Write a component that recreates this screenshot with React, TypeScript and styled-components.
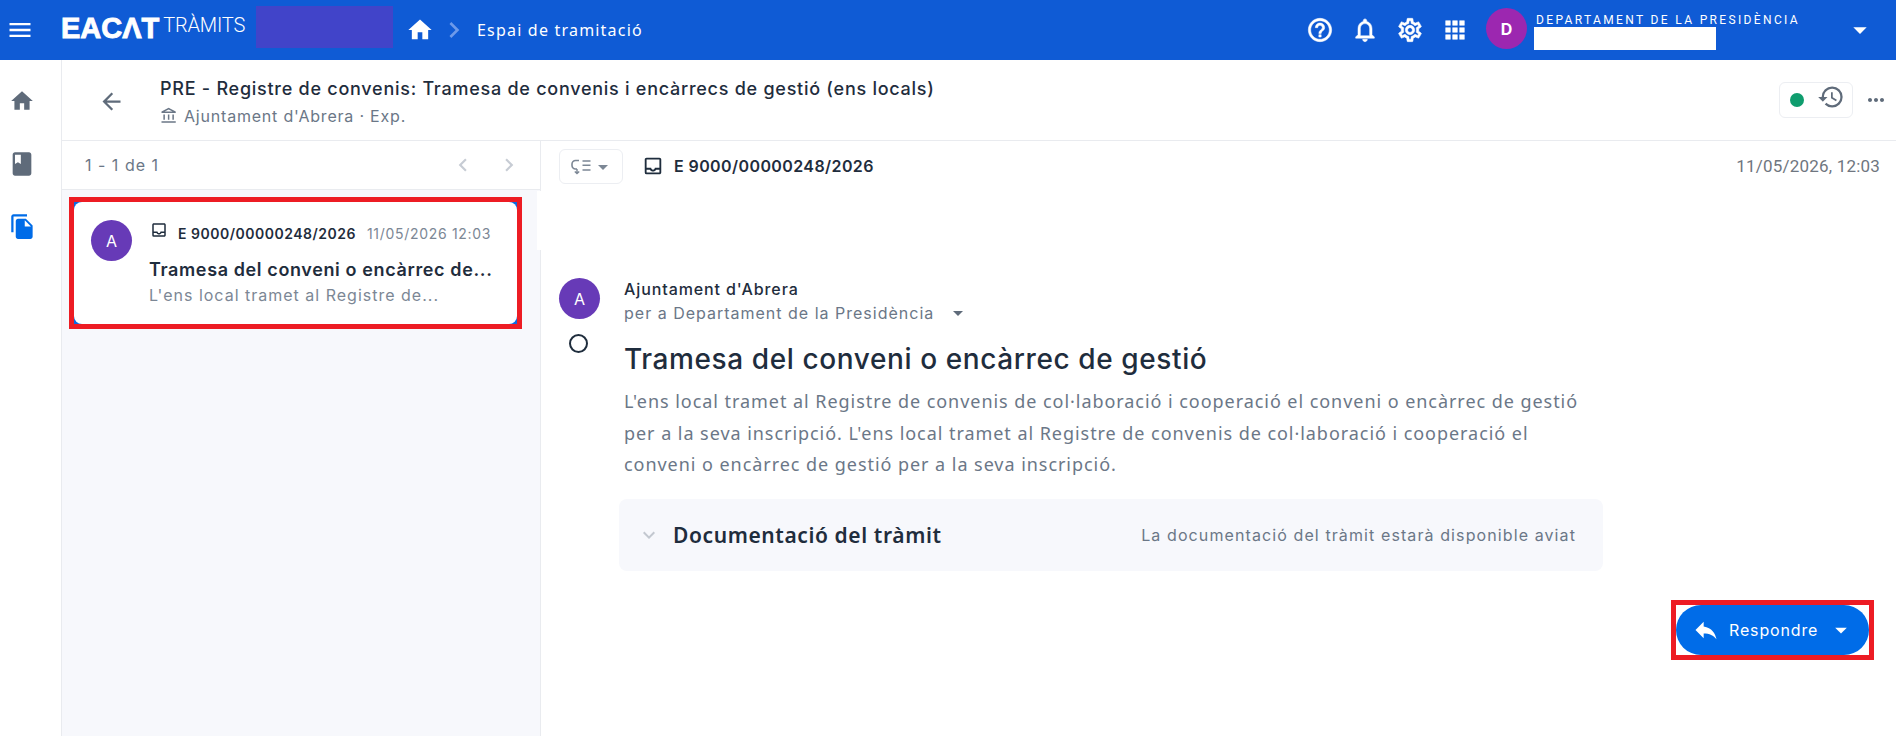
import styled, { createGlobalStyle } from "styled-components";
import {
  MdMenu,
  MdHome,
  MdHelpOutline,
  MdNotificationsNone,
  MdOutlineSettings,
  MdApps,
  MdArrowDropDown,
  MdBook,
  MdFileCopy,
  MdArrowBack,
  MdOutlineAccountBalance,
  MdHistory,
  MdMoreHoriz,
  MdOutlineInbox,
  MdChevronLeft,
  MdChevronRight,
  MdExpandMore,
  MdReply,
} from "react-icons/md";

const WORK = `Inter, "Liberation Sans", sans-serif`;
const PLEX = `"Noto Sans", "Liberation Sans", sans-serif`;

const GlobalStyle = createGlobalStyle`
  html, body {
    margin: 0;
    padding: 0;
    background: #fff;
    font-family: ${WORK};
    overflow: hidden;
  }
  * { box-sizing: border-box; }
`;

const Page = styled.div`
  width: 1896px;
  height: 736px;
  display: flex;
  flex-direction: column;
  overflow: hidden;
`;

/* top bar */
const TopBar = styled.header`
  height: 60px;
  flex: none;
  background: #0f5bd5;
  color: #fff;
  display: flex;
  align-items: center;
  padding-left: 6px;
`;

const MenuButton = styled.div`
  display: flex;
  width: 55px;
`;

const Logo = styled.div`
  display: flex;
  align-items: flex-start;
  width: 195px;
  margin-bottom: 3px;
`;

const LogoMark = styled.span`
  font: 900 29px/35px "Liberation Sans", sans-serif;
  letter-spacing: 0;
  -webkit-text-stroke: 0.9px #fff;
`;

const LogoProduct = styled.span`
  font: 300 20px/22px Roboto, sans-serif;
  margin: 3px 0 0 4px;
  letter-spacing: -0.2px;
`;

const Masked = styled.div`
  width: 137px;
  height: 42px;
  margin-bottom: 6px;
  background: #4144c9;
`;

const Crumbs = styled.nav`
  display: flex;
  align-items: center;
  margin-left: 13px;
`;

const CrumbSeparator = styled.span`
  display: flex;
  margin: 0 7px 0 4px;
  color: #6d9aea;
`;

const CrumbText = styled.span`
  font: 400 16px/20px ${PLEX};
  letter-spacing: 1.2px;
`;

const TopActions = styled.div`
  margin-left: auto;
  display: flex;
  align-items: center;
  gap: 17px;
  svg { stroke: currentColor; stroke-width: 0.45; }
  svg path[fill="none"] { stroke: none; }
`;

const TopAction = styled.span`
  display: flex;
  width: 28px;
  justify-content: center;
`;

const Account = styled.div`
  display: flex;
  align-items: center;
  margin-left: 17px;
  width: 410px;
`;

const Avatar = styled.span<{ $color: string; $bold?: boolean }>`
  width: 41px;
  height: 41px;
  flex: none;
  border-radius: 50%;
  background: ${(p) => p.$color};
  color: #fff;
  display: flex;
  align-items: center;
  justify-content: center;
  font: ${(p) => (p.$bold ? 700 : 400)} 16px/1 ${WORK};
`;

const AccountAvatar = styled(Avatar)`
  margin-bottom: 3px;
`;

const AccountText = styled.div`
  margin-left: 7px;
  display: flex;
  flex-direction: column;
  margin-top: 1px;
`;

const AccountName = styled.span`
  font: 400 12px/14px Roboto, sans-serif;
  letter-spacing: 2.35px;
  margin-left: 2px;
  margin-top: 1px;
`;

const MaskedName = styled.span`
  width: 182px;
  height: 23px;
  background: #fff;
`;

const AccountCaret = styled.span`
  display: flex;
  margin-left: auto;
  margin-right: 20px;
`;

/* body */
const Body = styled.div`
  flex: 1;
  display: flex;
  min-height: 0;
`;

const SideNav = styled.aside`
  width: 62px;
  flex: none;
  border-right: 1px solid #e9ebef;
  padding-top: 9px;
`;

const SideItem = styled.div<{ $active?: boolean }>`
  width: 44px;
  height: 63px;
  display: flex;
  align-items: center;
  justify-content: center;
  color: ${(p) => (p.$active ? "#006ce8" : "#5f6b7a")};
`;

const Main = styled.main`
  flex: 1;
  display: flex;
  flex-direction: column;
  min-width: 0;
`;

const DetailHeader = styled.div`
  height: 81px;
  flex: none;
  border-bottom: 1px solid #e9ebef;
  display: flex;
  align-items: flex-start;
`;

const BackButton = styled.span`
  display: flex;
  color: #5f6b7a;
  margin: 28px 0 0 36px;
`;

const DetailTitles = styled.div`
  margin-left: 35px;
  padding-top: 18px;
`;

const DetailTitle = styled.h1`
  margin: 0;
  font: 500 18px/22px ${WORK};
  letter-spacing: 0.74px;
  color: #1f2d3d;
`;

const DetailSub = styled.div`
  display: flex;
  align-items: center;
  margin-top: 6px;
  gap: 6px;
  color: #6b7787;
  font: 400 16px/20px ${WORK};
  letter-spacing: 0.8px;
`;

const HeaderActions = styled.div`
  margin-left: auto;
  display: flex;
  align-items: center;
  gap: 11px;
  margin: 22px 8px 0 auto;
`;

const StatusBox = styled.div`
  width: 74px;
  height: 36px;
  border: 1px solid #eceef2;
  border-radius: 6px;
  display: flex;
  align-items: center;
  padding-left: 10px;
  color: #5f6b7a;
`;

const StatusDot = styled.span`
  width: 14px;
  height: 14px;
  border-radius: 50%;
  background: #0f9d6e;
  margin-right: 13px;
`;

const HistoryIcon = styled(MdHistory)`
  margin-top: -6px;
`;

const Split = styled.div`
  flex: 1;
  display: flex;
  min-height: 0;
  position: relative;
`;

const ListPane = styled.section`
  width: 479px;
  flex: none;
  border-right: 1px solid #e9ebef;
  display: flex;
  flex-direction: column;
`;

const ListHeader = styled.div`
  height: 49px;
  flex: none;
  border-bottom: 1px solid #e9ebef;
  display: flex;
  align-items: center;
  padding: 0 18px 0 23px;
  color: #6b7787;
  font: 400 16px/20px ${WORK};
  letter-spacing: 1px;
`;

const Pager = styled.div`
  margin-left: auto;
  display: flex;
  gap: 20px;
  color: #c7ccd4;
`;

const ListBody = styled.div`
  flex: 1;
  background: #f7f8fc;
  padding: 7px 0 0 7px;
`;

/* white notch of the hidden scrollbar, lies over the pane border */
const ScrollGap = styled.span`
  position: absolute;
  left: 475px;
  top: 50px;
  width: 5px;
  height: 59px;
  background: #fff;
`;

/* annotation frame from the screenshot, sits round the real element */
const Marked = styled.div`
  border: 5px solid #ed1c24;
`;

const CardFrame = styled(Marked)`
  width: 453px;
  height: 132px;
  background: #0b6ae0;
`;

const Card = styled.article`
  height: 100%;
  background: #fff;
  border-radius: 8px;
  display: flex;
  padding: 18px 0 0 17px;
`;

const CardContent = styled.div`
  margin-left: 17px;
  min-width: 0;
`;

const CardMeta = styled.div`
  display: flex;
  align-items: flex-start;
  padding: 1px 0 0 1px;
  height: 22px;
  color: #1f2d3d;
`;

const RegNumber = styled.span<{ $big?: boolean }>`
  font: 600 ${(p) => (p.$big ? "16px" : "14px")}/20px ${WORK};
  letter-spacing: ${(p) => (p.$big ? "0.4px" : "0.5px")};
  color: #1f2d3d;
  margin-left: 10px;
`;

const CardRegNumber = styled(RegNumber)`
  margin-top: 3px;
`;

const CardDate = styled.span`
  font: 400 14px/20px ${WORK};
  letter-spacing: 0.7px;
  color: #7c8795;
  margin: 3px 0 0 11px;
`;

const CardTitle = styled.div`
  font: 600 18px/24px ${WORK};
  letter-spacing: 0.62px;
  color: #1f2d3d;
  margin-top: 16px;
  white-space: nowrap;
`;

const CardDesc = styled.div`
  font: 400 16px/22px ${WORK};
  letter-spacing: 1px;
  color: #7c8795;
  margin-top: 2px;
  white-space: nowrap;
`;

const Thread = styled.section`
  flex: 1;
  min-width: 0;
  display: flex;
  flex-direction: column;
`;

const ThreadBar = styled.div`
  height: 49px;
  flex: none;
  display: flex;
  align-items: center;
  padding: 0 16px 0 18px;
  color: #1f2d3d;
`;

const SortButton = styled.div`
  width: 64px;
  height: 35px;
  margin-top: 2px;
  border: 1px solid #eceef2;
  border-radius: 6px;
  display: flex;
  align-items: center;
  padding-left: 11px;
  color: #7c8795;
  margin-right: 19px;
`;

const ThreadDate = styled.span`
  margin-left: auto;
  font: 400 17px/20px Roboto, sans-serif;
  letter-spacing: 0.2px;
  color: #6f7680;
`;

const Message = styled.div`
  display: flex;
  padding: 88px 0 0 18px;
`;

const MessageRail = styled.div`
  width: 65px;
  flex: none;
  display: flex;
  flex-direction: column;
`;

const RailRing = styled.span`
  width: 19px;
  height: 19px;
  border: 2px solid #1f2d3d;
  border-radius: 50%;
  margin: 15px 0 0 10px;
`;

const MessageBody = styled.div`
  min-width: 0;
`;

const Sender = styled.div`
  font: 500 16px/22px ${WORK};
  letter-spacing: 0.9px;
  color: #1f2d3d;
`;

const Recipient = styled.div`
  display: flex;
  align-items: center;
  margin-top: 1px;
  font: 400 16px/22px ${WORK};
  letter-spacing: 1px;
  color: #6b7787;
`;

const RecipientCaret = styled.span`
  display: flex;
  margin-left: 12px;
  color: #5f6b7a;
`;

const Subject = styled.h2`
  margin: 16px 0 0;
  font: 500 28px/36px ${WORK};
  letter-spacing: 0.6px;
  color: #1f2d3d;
`;

const Lead = styled.p`
  margin: 9px 0 0;
  width: 975px;
  font: 400 18px/31.5px ${PLEX};
  letter-spacing: 0.95px;
  color: #6b7787;
`;

const Docs = styled.div`
  margin: 18px 0 0 -5px;
  width: 984px;
  height: 72px;
  background: #f7f8fc;
  border-radius: 8px;
  display: flex;
  align-items: center;
  padding: 0 27px 0 18px;
`;

const DocsChevron = styled.span`
  display: flex;
  color: #c3c8d0;
  margin-right: 12px;
`;

const DocsTitle = styled.span`
  font: 600 21px/28px ${PLEX};
  letter-spacing: 0.6px;
  color: #1f2d3d;
`;

const DocsNote = styled.span`
  margin-left: auto;
  font: 400 16px/20px ${WORK};
  letter-spacing: 1.1px;
  color: #6b7787;
`;

const ReplyRow = styled.div`
  display: flex;
  justify-content: flex-end;
  padding: 29px 22px 0 0;
`;

const ReplyFrame = styled(Marked)`
  width: 203px;
  height: 60px;
  background: #fff;
`;

const ReplyButton = styled.button`
  width: 100%;
  height: 100%;
  border: 0;
  border-radius: 25px;
  background: #006ce8;
  color: #fff;
  display: flex;
  align-items: center;
  padding: 0 0 0 16px;
  font: 400 16px/20px ${WORK};
  letter-spacing: 0.85px;
`;

const ReplyLabel = styled.span`
  margin-left: 9px;
`;

const ReplyCaret = styled.span`
  display: flex;
  margin-left: 9px;
`;

const SortIcon = () => (
  <svg width="20" height="16" viewBox="0 0 20 16" fill="none" stroke="currentColor" strokeWidth="1.6">
    <path d="M8 1.5H4.5A3.5 3.5 0 0 0 1 5v1.5A3.5 3.5 0 0 0 4.5 10H6" />
    <path d="M6 10v4.5M3.8 12.4 6 14.6l2.2-2.2" strokeWidth="1.4" />
    <path d="M11.5 2h8M11.5 6.3h8M11.5 11h8" />
  </svg>
);

const App = () => {
  return (
    <Page>
      <GlobalStyle />
      <TopBar>
        <MenuButton>
          <MdMenu size={28} />
        </MenuButton>
        <Logo>
          <LogoMark>EACΛT</LogoMark>
          <LogoProduct>TRÀMITS</LogoProduct>
        </Logo>
        <Masked />
        <Crumbs>
          <MdHome size={28} />
          <CrumbSeparator>
            <MdChevronRight size={32} />
          </CrumbSeparator>
          <CrumbText>Espai de tramitació</CrumbText>
        </Crumbs>
        <TopActions>
          <TopAction>
            <MdHelpOutline size={28} />
          </TopAction>
          <TopAction>
            <MdNotificationsNone size={28} />
          </TopAction>
          <TopAction>
            <MdOutlineSettings size={28} />
          </TopAction>
          <TopAction>
            <MdApps size={28} />
          </TopAction>
        </TopActions>
        <Account>
          <AccountAvatar $color="#9c27b0" $bold>D</AccountAvatar>
          <AccountText>
            <AccountName>DEPARTAMENT DE LA PRESIDÈNCIA</AccountName>
            <MaskedName />
          </AccountText>
          <AccountCaret>
            <MdArrowDropDown size={32} />
          </AccountCaret>
        </Account>
      </TopBar>
      <Body>
        <SideNav>
          <SideItem>
            <MdHome size={26} />
          </SideItem>
          <SideItem>
            <MdBook size={28} />
          </SideItem>
          <SideItem $active>
            <MdFileCopy size={27} />
          </SideItem>
        </SideNav>
        <Main>
          <DetailHeader>
            <BackButton>
              <MdArrowBack size={27} />
            </BackButton>
            <DetailTitles>
              <DetailTitle>PRE - Registre de convenis: Tramesa de convenis i encàrrecs de gestió (ens locals)</DetailTitle>
              <DetailSub>
                <MdOutlineAccountBalance size={18} />
                <span>Ajuntament d'Abrera · Exp.</span>
              </DetailSub>
            </DetailTitles>
            <HeaderActions>
              <StatusBox>
                <StatusDot />
                <HistoryIcon size={28} />
              </StatusBox>
              <MdMoreHoriz size={24} color="#5f6b7a" />
            </HeaderActions>
          </DetailHeader>
          <Split>
            <ListPane>
              <ListHeader>
                1 - 1 de 1
                <Pager>
                  <MdChevronLeft size={26} />
                  <MdChevronRight size={26} />
                </Pager>
              </ListHeader>
              <ListBody>
                <CardFrame>
                  <Card>
                    <Avatar $color="#673ab7">A</Avatar>
                    <CardContent>
                      <CardMeta>
                        <MdOutlineInbox size={18} />
                        <CardRegNumber>E 9000/00000248/2026</CardRegNumber>
                        <CardDate>11/05/2026 12:03</CardDate>
                      </CardMeta>
                      <CardTitle>Tramesa del conveni o encàrrec de...</CardTitle>
                      <CardDesc>L'ens local tramet al Registre de...</CardDesc>
                    </CardContent>
                  </Card>
                </CardFrame>
              </ListBody>
            </ListPane>
            <ScrollGap />
            <Thread>
              <ThreadBar>
                <SortButton>
                  <SortIcon />
                  <MdArrowDropDown size={24} />
                </SortButton>
                <MdOutlineInbox size={22} />
                <RegNumber $big>E 9000/00000248/2026</RegNumber>
                <ThreadDate>11/05/2026, 12:03</ThreadDate>
              </ThreadBar>
              <Message>
                <MessageRail>
                  <Avatar $color="#673ab7">A</Avatar>
                  <RailRing />
                </MessageRail>
                <MessageBody>
                  <Sender>Ajuntament d'Abrera</Sender>
                  <Recipient>
                    per a Departament de la Presidència
                    <RecipientCaret>
                      <MdArrowDropDown size={24} />
                    </RecipientCaret>
                  </Recipient>
                  <Subject>Tramesa del conveni o encàrrec de gestió</Subject>
                  <Lead>
                    L'ens local tramet al Registre de convenis de col·laboració i cooperació el conveni o encàrrec de gestió per a la seva inscripció. L'ens local tramet al Registre de convenis de col·laboració i cooperació el conveni o encàrrec de gestió per a la seva inscripció.
                  </Lead>
                  <Docs>
                    <DocsChevron>
                      <MdExpandMore size={24} />
                    </DocsChevron>
                    <DocsTitle>Documentació del tràmit</DocsTitle>
                    <DocsNote>La documentació del tràmit estarà disponible aviat</DocsNote>
                  </Docs>
                </MessageBody>
              </Message>
              <ReplyRow>
                <ReplyFrame>
                  <ReplyButton>
                    <MdReply size={28} />
                    <ReplyLabel>Respondre</ReplyLabel>
                    <ReplyCaret>
                      <MdArrowDropDown size={28} />
                    </ReplyCaret>
                  </ReplyButton>
                </ReplyFrame>
              </ReplyRow>
            </Thread>
          </Split>
        </Main>
      </Body>
    </Page>
  );
};

export default App;
